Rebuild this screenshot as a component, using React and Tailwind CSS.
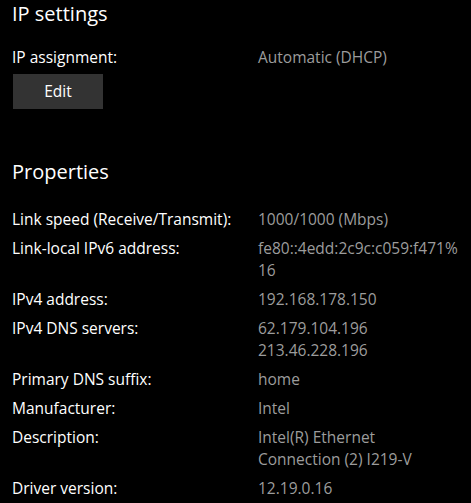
import React from 'react';

const rows = [
    { label: 'Link speed (Receive/Transmit):', value: ['1000/1000 (Mbps)'] },
    { label: 'Link-local IPv6 address:', value: ['fe80::4edd:2c9c:c059:f471%', '16'] },
    { label: 'IPv4 address:', value: ['192.168.178.150'] },
    { label: 'IPv4 DNS servers:', value: ['62.179.104.196', '213.46.228.196'] },
    { label: 'Primary DNS suffix:', value: ['home'] },
    { label: 'Manufacturer:', value: ['Intel'] },
    { label: 'Description:', value: ['Intel(R) Ethernet', 'Connection (2) I219-V'] },
    { label: 'Driver version:', value: ['12.19.0.16'] },
];

const App = () => {
    return (
        <div
            className="min-h-screen bg-black text-white px-[12px] overflow-hidden"
            style={{ fontFamily: '"Open Sans", "Noto Sans", sans-serif' }}
        >
            <h1 className="text-[20px] leading-[28px] font-normal">IP settings</h1>

            <div className="mt-[18px] grid grid-cols-[246px_1fr] text-[15.5px] leading-[22px]">
                <span>IP assignment:</span>
                <span className="text-[#9c9c9c]">Automatic (DHCP)</span>
            </div>
            <button className="mt-[6px] w-[90px] h-[35px] bg-[#333333] text-[15.5px] text-white ml-px">
                Edit
            </button>

            <h2 className="mt-[49px] text-[20px] leading-[28px] font-normal">Properties</h2>

            {/* Properties list */}
            <div className="mt-[22px] flex flex-col gap-[7px] text-[15.5px] leading-[22px]">
                {rows.map(row => (
                    <div key={row.label} className="grid grid-cols-[246px_1fr]">
                        <span>{row.label}</span>
                        <span className="text-[#9c9c9c]">
                            {row.value.map(line => (
                                <span key={line} className="block whitespace-nowrap">{line}</span>
                            ))}
                        </span>
                    </div>
                ))}
            </div>
        </div>
    );
};

export default App;
